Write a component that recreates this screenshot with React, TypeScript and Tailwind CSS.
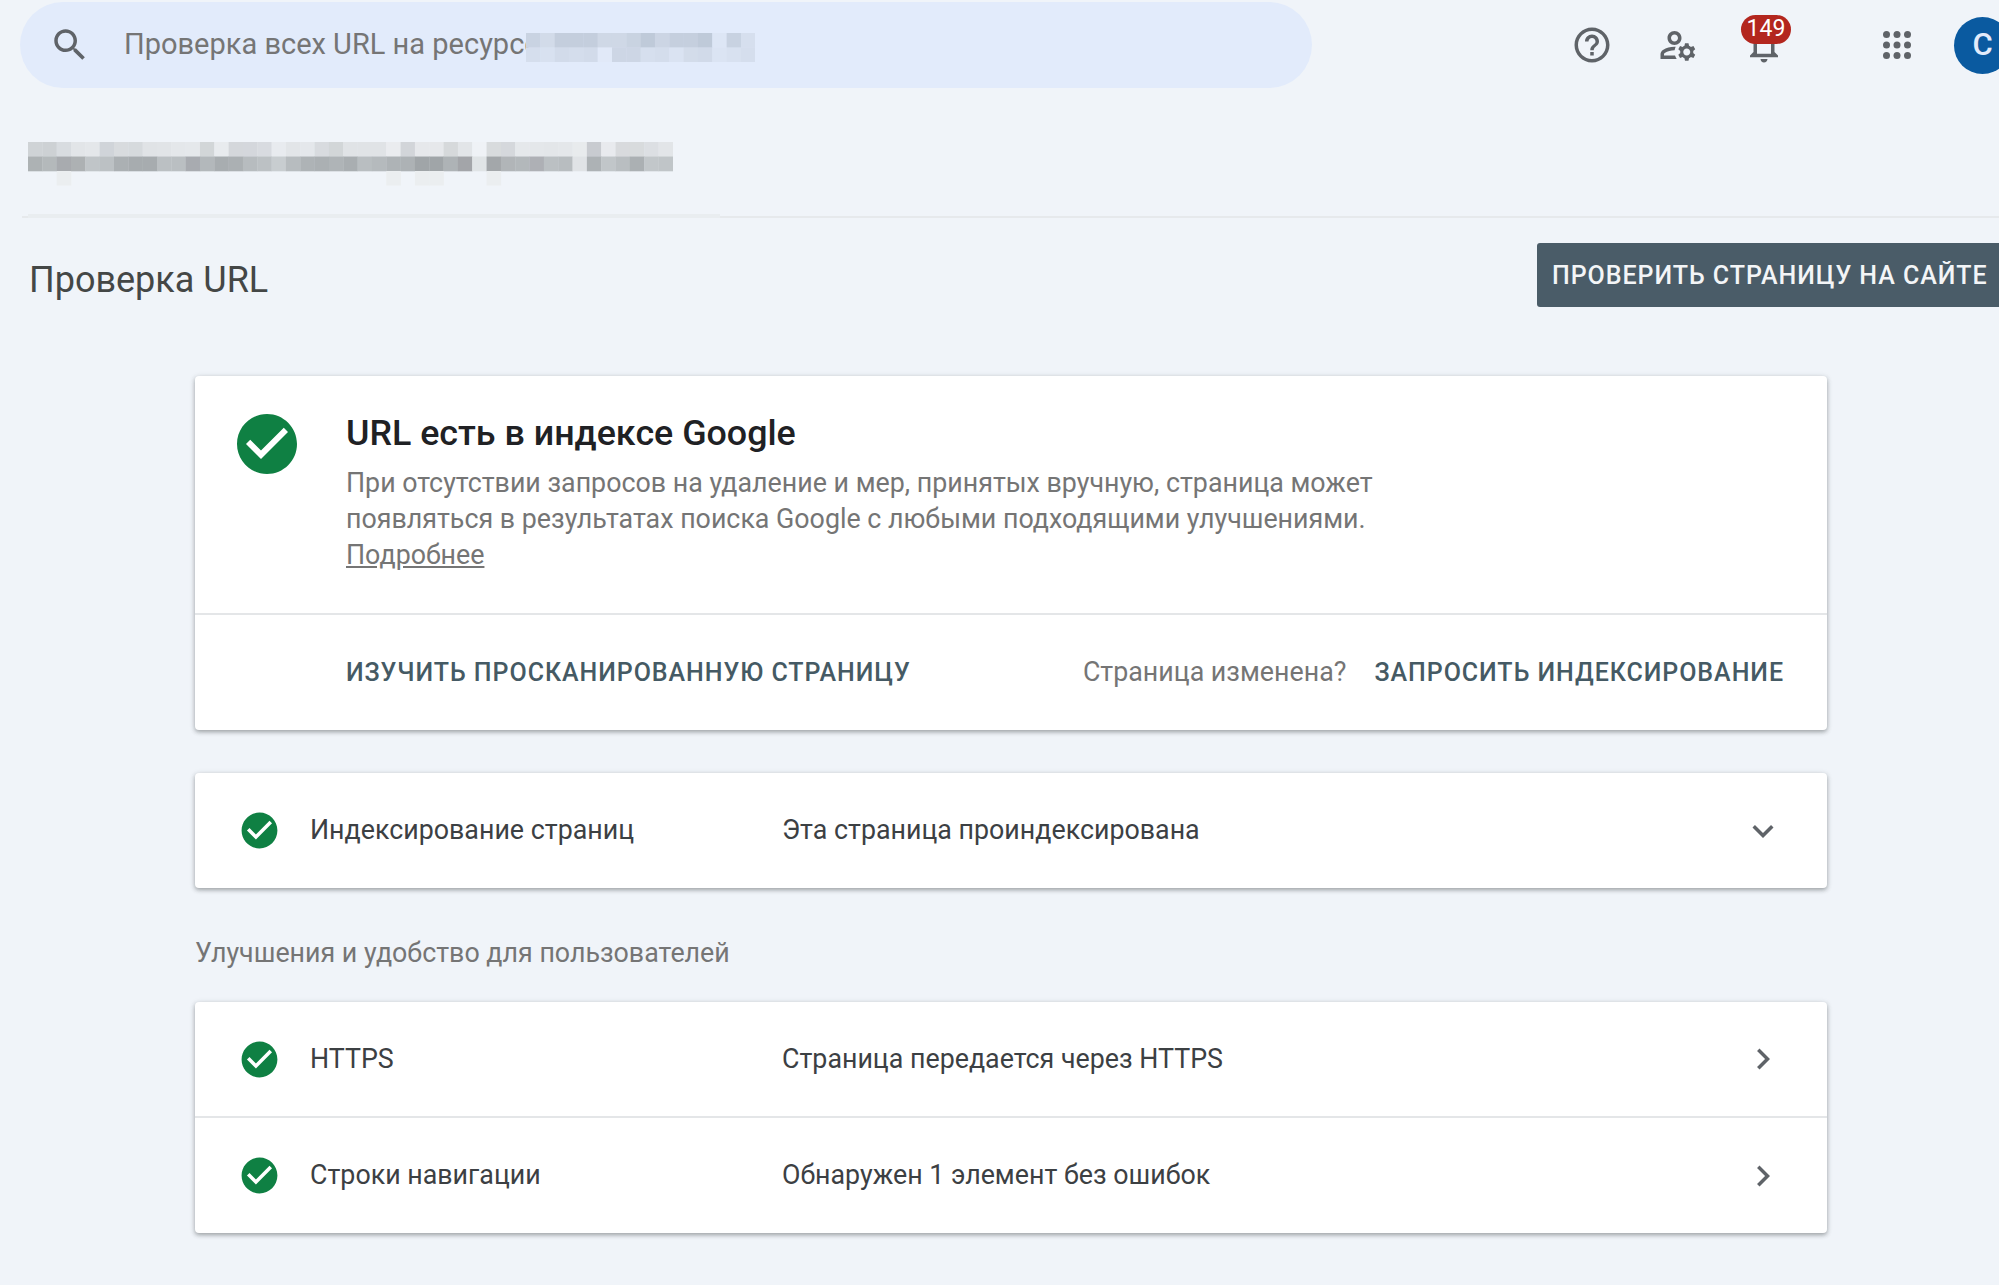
import React from 'react';

const breadcrumbRows = [
  ['#cfd3d6', '#cdd1d4', '#d8dce0', '#e2e5e8', '#e4e7ea', '#d0d4d9', '#d8dbde', '#d6dadd', '#e0e3e6', '#e1e4e7', '#e4e7ea', '#e5e8eb', '#d2d6d8', '#e8ebee', '#d4d7db', '#d4d7dc', '#d8dbe0', '#e8ebef', '#e2e5e8', '#e4e7eb', '#d8dbdf', '#d2d6d8', '#e0e3e6', '#e0e3e6', '#e0e3e6', '#eaecef', '#d2d5d9', '#e6e8eb', '#e6e8eb', '#d6d9db', '#e2e5e8', '#eff2f6', '#d8dbdd', '#d5d8dc', '#e5e8eb', '#e4e7ea', '#e3e6e9', '#e4e7ea', '#e8ebed', '#c8cbd0', '#e8eaee', '#d8dadd', '#d8dbdd', '#dcdfe3', '#e2e5e8'],
  ['#adb2b4', '#b4b9bb', '#a8abaf', '#adb1b3', '#c0c5c8', '#bcc1c4', '#abb0b3', '#a7acaf', '#a7acaf', '#bbc0c3', '#babfc2', '#a8abb0', '#b3b8bb', '#a8adb0', '#abb0b3', '#b7bcbf', '#bcc1c4', '#c8cdd0', '#b7bcbf', '#aeb3b6', '#abb0b3', '#afb4b7', '#a9aeb1', '#b9bec1', '#b5babd', '#aeb3b6', '#adb2b5', '#a0a5a8', '#a0a5a8', '#aeb3b6', '#a3a5a9', '#e0e4e6', '#a3a7aa', '#b1b5b8', '#b3b8bb', '#aeb0b5', '#bbc0c3', '#b8bdc0', '#e0e3e6', '#adb2b5', '#c1c6c9', '#b9bec1', '#abb0b3', '#c2c7ca', '#c0c5c8'],
];

const searchRows = [
  ['#c9d3e2', '#d2dbe9', '#c4cedd', '#c4cedd', '#c4cedd', '#cfd8e6', '#cfd8e6', '#c9d3e1', '#bfcad9', '#ccd5e4', '#c5cfde', '#c5cfde', '#bfcad9', '#dde6f5', '#c8d2e1', '#d6dfee'],
  ['#d5deed', '#d8e1f0', '#d2dbea', '#d4ddec', '#d2dbea', '#e1e9f8', '#cdd6e5', '#cdd6e5', '#d6dfee', '#d4ddec', '#dae3f2', '#d3dcea', '#d1dae9', '#dbe4f3', '#d8e1f0', '#d5deed'],
];

function Mosaic({ rows, descenders = [] }: { rows: string[][]; descenders?: number[] }) {
  const cols = rows[0].length;
  return (
    <svg width={cols * 14.33} height={(rows.length + (descenders.length ? 1 : 0)) * 14.5} className="block">
      {rows.map((row, y) =>
        row.map((color, x) => <rect key={`${x}-${y}`} x={x * 14.33} y={y * 14.5} width="14.6" height="14.8" fill={color} />)
      )}
      {descenders.map((x) => (
        <rect key={x} x={x * 14.33} y={rows.length * 14.5} width="14.6" height="14.5" fill="#ebeef0" />
      ))}
    </svg>
  );
}

function Icon({ d, size = 42, className = 'fill-[#5f6368]' }: { d: string | string[]; size?: number; className?: string }) {
  const paths = Array.isArray(d) ? d : [d];
  return (
    <svg width={size} height={size} viewBox="0 0 24 24" className={`block shrink-0 ${className}`}>
      {paths.map((p) => (
        <path key={p} d={p} />
      ))}
    </svg>
  );
}

const icons = {
  search:
    'M15.5 14h-.79l-.28-.27C15.41 12.59 16 11.11 16 9.5 16 5.91 13.09 3 9.5 3S3 5.91 3 9.5 5.91 16 9.5 16c1.61 0 3.09-.59 4.23-1.57l.27.28v.79l5 4.99L20.49 19l-4.99-5zm-6 0C7.01 14 5 11.99 5 9.5S7.01 5 9.5 5 14 7.01 14 9.5 11.99 14 9.5 14z',
  help:
    'M11 18h2v-2h-2v2zm1-16C6.48 2 2 6.48 2 12s4.48 10 10 10 10-4.48 10-10S17.52 2 12 2zm0 18c-4.41 0-8-3.59-8-8s3.59-8 8-8 8 3.59 8 8-3.59 8-8 8zm0-14c-2.21 0-4 1.79-4 4h2c0-1.1.9-2 2-2s2 .9 2 2c0 2-3 1.75-3 5h2c0-2.25 3-2.5 3-5 0-2.21-1.79-4-4-4z',
  accounts: [
    'M4 18v-.65c0-.34.16-.66.41-.81C6.1 15.53 8.03 15 10 15c.03 0 .05 0 .08.01.1-.7.3-1.37.59-1.98-.22-.02-.44-.03-.67-.03-2.42 0-4.68.67-6.61 1.82-.88.52-1.39 1.5-1.39 2.53V20h9.26c-.42-.6-.75-1.28-.97-2H4z',
    'M10 12c2.21 0 4-1.79 4-4s-1.79-4-4-4-4 1.79-4 4 1.79 4 4 4zm0-6c1.1 0 2 .9 2 2s-.9 2-2 2-2-.9-2-2 .9-2 2-2z',
    'M20.75 16c0-.22-.03-.42-.06-.63l1.14-1.01-1-1.73-1.45.49c-.32-.27-.68-.48-1.08-.63L18 11h-2l-.3 1.49c-.4.15-.76.36-1.08.63l-1.45-.49-1 1.73 1.14 1.01c-.03.21-.06.41-.06.63s.03.42.06.63l-1.14 1.01 1 1.73 1.45-.49c.32.27.68.48 1.08.63L16 21h2l.3-1.49c.4-.15.76-.36 1.08-.63l1.45.49 1-1.73-1.14-1.01c.03-.21.06-.41.06-.63zM17 18c-1.1 0-2-.9-2-2s.9-2 2-2 2 .9 2 2-.9 2-2 2z',
  ],
  bell:
    'M12 22c1.1 0 2-.9 2-2h-4c0 1.1.9 2 2 2zm6-6v-5c0-3.07-1.63-5.64-4.5-6.32V4c0-.83-.67-1.5-1.5-1.5s-1.5.67-1.5 1.5v.68C7.64 5.36 6 7.92 6 11v5l-2 2v1h16v-1l-2-2zm-2 1H8v-6c0-2.48 1.51-4.5 4-4.5s4 2.02 4 4.5v6z',
  check: 'M12 2C6.48 2 2 6.48 2 12s4.48 10 10 10 10-4.48 10-10S17.52 2 12 2zm-2 15l-5-5 1.41-1.41L10 14.17l7.59-7.59L19 8l-9 9z',
  expand: 'M16.59 8.59L12 13.17 7.41 8.59 6 10l6 6 6-6z',
  chevron: 'M10 6L8.59 7.41 13.17 12l-4.58 4.59L10 18l6-6z',
};

function AppsIcon() {
  const dots = [6, 12, 18];
  return (
    <svg width="42" height="42" viewBox="0 0 24 24" className="block shrink-0 fill-[#5f6368]">
      {dots.map((y) => dots.map((x) => <circle key={`${x}-${y}`} cx={x} cy={y} r="2" />))}
    </svg>
  );
}

function ResultRow({ label, value, icon, divided }: { label: string; value: string; icon: string; divided?: boolean }) {
  return (
    <div className={`flex items-center text-[26.8px] text-[#3c4043] ${divided ? 'h-[116px] border-b-2 border-[#e4e6e8]' : 'h-[115px]'}`}>
      <div className="ml-[43px] w-[72px]">
        <Icon d={icons.check} size={43} className="fill-[#0f8043]" />
      </div>
      <div className="w-[472px]">{label}</div>
      <div className="flex-1">{value}</div>
      <div className="mr-[43px]">
        <Icon d={icon} />
      </div>
    </div>
  );
}

export default function App() {
  return (
    <div className="h-[1285px] w-[1999px] overflow-hidden bg-[#f0f4f9] font-['Roboto',sans-serif]">
      <header className="flex h-[90px] items-center">
        <div className="relative ml-[20px] flex h-[86px] w-[1292px] shrink-0 items-center overflow-hidden rounded-[43px] bg-[#e2ebfb]">
          <div className="ml-[29px]">
            <Icon d={icons.search} />
          </div>
          <div className="ml-[33px] text-[29px] text-[#757575]">Проверка всех URL на ресурсе</div>
          <div className="absolute left-[506px] top-[31px]">
            <Mosaic rows={searchRows} />
          </div>
        </div>
        <div className="ml-[259px]">
          <Icon d={icons.help} />
        </div>
        <div className="ml-[44px]">
          <Icon d={icons.accounts} />
        </div>
        <div className="relative ml-[44px]">
          <Icon d={icons.bell} />
          <div className="absolute left-[-2px] top-[-9px] flex h-[29px] w-[50px] items-center justify-center rounded-[15px] bg-[#b3261e] text-[23px] text-white">
            149
          </div>
        </div>
        <div className="ml-[91px]">
          <AppsIcon />
        </div>
        <div className="ml-[36px] flex h-[57px] w-[57px] shrink-0 items-center justify-center rounded-full bg-[#0a5aa0] text-[31px] font-medium text-[#e2ebfb]">
          C
        </div>
      </header>

      <div className="ml-[22px] h-[128px] border-b-2 border-[#e6e9ec]">
        <div className="ml-[6px] h-[128px] w-[692px] border-b-[4px] border-[#e9edf0] pt-[52px]">
          <Mosaic rows={breadcrumbRows} descenders={[2, 25, 27, 28, 32]} />
        </div>
      </div>

      <div className="flex h-[158px] items-start">
        <h1 className="ml-[29px] mt-[35px] text-[36px] text-[#444746]">Проверка URL</h1>
        <button className="ml-auto mt-[25px] h-[64px] w-[462px] rounded-l-[3px] bg-[#4a5c68] pl-[15px] pt-[1px] text-left text-[25px] font-medium tracking-[0.95px] text-[#f3f5f7]">
          ПРОВЕРИТЬ СТРАНИЦУ НА САЙТЕ
        </button>
      </div>

      <main className="ml-[195px] w-[1632px]">
        <section className="h-[354px] rounded-[4px] bg-white shadow-[0_2px_4px_rgba(60,64,67,0.4),0_1px_6px_rgba(60,64,67,0.12)]">
          <div className="flex h-[239px] border-b-2 border-[#e4e6e8]">
            <div className="ml-[36px] mt-[32px] w-[115px]">
              <Icon d={icons.check} size={72} className="fill-[#0f8043]" />
            </div>
            <div className="pt-[37px]">
              <h2 className="text-[35.8px] leading-[40px] font-medium text-[#202124]">URL есть в индексе Google</h2>
              <p className="mt-[12px] text-[26.8px] leading-[36px] text-[#757575]">
                При отсутствии запросов на удаление и мер, принятых вручную, страница может
                <br />
                появляться в результатах поиска Google с любыми подходящими улучшениями.
                <br />
                <a className="underline">Подробнее</a>
              </p>
            </div>
          </div>
          <div className="flex h-[115px] items-center text-[25px]">
            <span className="ml-[151px] font-medium tracking-[0.95px] text-[#455a64]">ИЗУЧИТЬ ПРОСКАНИРОВАННУЮ СТРАНИЦУ</span>
            <span className="ml-auto text-[26.8px] text-[#757575]">Страница изменена?</span>
            <span className="ml-[28px] mr-[43px] font-medium tracking-[0.95px] text-[#455a64]">ЗАПРОСИТЬ ИНДЕКСИРОВАНИЕ</span>
          </div>
        </section>

        <section className="mt-[43px] rounded-[4px] bg-white shadow-[0_2px_4px_rgba(60,64,67,0.4),0_1px_6px_rgba(60,64,67,0.12)]">
          <ResultRow label="Индексирование страниц" value="Эта страница проиндексирована" icon={icons.expand} />
        </section>

        <div className="h-[114px] pt-[47px] text-[26.8px] leading-[36px] text-[#757575]">Улучшения и удобство для пользователей</div>

        <section className="rounded-[4px] bg-white shadow-[0_2px_4px_rgba(60,64,67,0.4),0_1px_6px_rgba(60,64,67,0.12)]">
          <ResultRow label="HTTPS" value="Страница передается через HTTPS" icon={icons.chevron} divided />
          <ResultRow label="Строки навигации" value="Обнаружен 1 элемент без ошибок" icon={icons.chevron} />
        </section>
      </main>
    </div>
  );
}
